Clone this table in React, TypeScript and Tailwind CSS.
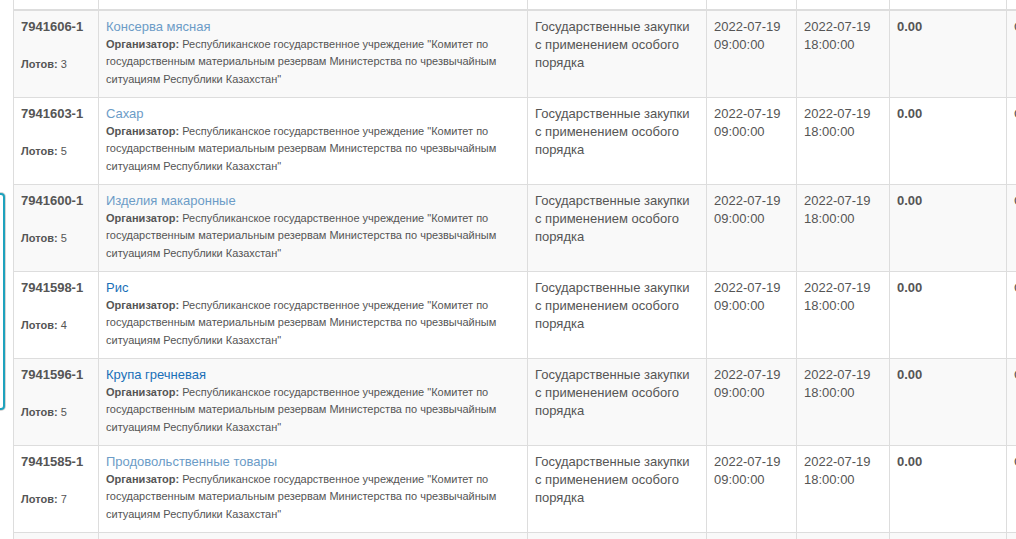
const rows = [
  { id: "7941606-1", title: "Консерва мясная", lots: 3, visited: true },
  { id: "7941603-1", title: "Сахар", lots: 5, visited: true },
  { id: "7941600-1", title: "Изделия макаронные", lots: 5, visited: true },
  { id: "7941598-1", title: "Рис", lots: 4, visited: false },
  { id: "7941596-1", title: "Крупа гречневая", lots: 5, visited: false },
  { id: "7941585-1", title: "Продовольственные товары", lots: 7, visited: true },
  { id: "7941583-1", title: "Мука", lots: 2, visited: true },
];

const cell = "border border-[#ddd] pl-[7px] pr-2 pt-[7px] pb-[9px] align-top";

export default function App() {
  return (
    <div
      className="relative h-[539px] w-[1016px] overflow-hidden bg-white text-[13px] text-[#555]"
      style={{ fontFamily: '"Liberation Sans", Arial, sans-serif' }}
    >
      <div className="absolute left-[-100px] top-[193px] h-[217px] w-[105px] rounded-[4px] border-2 border-[#1ea2bd] bg-white shadow-[0_0_0_1px_#d4d4d4]" />
      <table className="ml-[13px] w-[1103px] table-fixed border-collapse">
        <colgroup>
          <col className="w-[85px]" />
          <col className="w-[429px]" />
          <col className="w-[179px]" />
          <col className="w-[90px]" />
          <col className="w-[93px]" />
          <col className="w-[117px]" />
          <col className="w-[110px]" />
        </colgroup>
        <thead>
          <tr className="h-[10px]">
            {Array.from({ length: 7 }).map((_, i) => (
              <th key={i} className="border-x border-b-2 border-[#ddd] p-0" />
            ))}
          </tr>
        </thead>
        <tbody>
          {rows.map((r, i) => (
            <tr key={r.id} className={i % 2 === 0 ? "bg-[#f9f9f9]" : "bg-white"}>
              <td className={`${cell} leading-[18.5px]`}>
                <div className="font-bold">{r.id}</div>
                <div className="mt-[18.5px] text-[11px]">
                  <b>Лотов:</b> {r.lots}
                </div>
              </td>
              <td className={cell}>
                <div className={`leading-[18px] ${r.visited ? "text-[#6c9cc7]" : "text-[#1a70b8]"}`}>{r.title}</div>
                <div className="text-[11px] leading-[17.33px]">
                  <b>Организатор:</b> Республиканское государственное учреждение "Комитет по государственным
                  материальным резервам Министерства по чрезвычайным ситуациям Республики Казахстан"
                </div>
              </td>
              <td className={`${cell} leading-[18px]`}>Государственные закупки с применением особого порядка</td>
              <td className={`${cell} leading-[18px]`}>
                2022-07-19
                <br />
                09:00:00
              </td>
              <td className={`${cell} leading-[18px]`}>
                2022-07-19
                <br />
                18:00:00
              </td>
              <td className={`${cell} font-bold leading-[18px]`}>0.00</td>
              <td className={`${cell} leading-[18px] whitespace-nowrap`}>Опубликовано</td>
            </tr>
          ))}
        </tbody>
      </table>
    </div>
  );
}
